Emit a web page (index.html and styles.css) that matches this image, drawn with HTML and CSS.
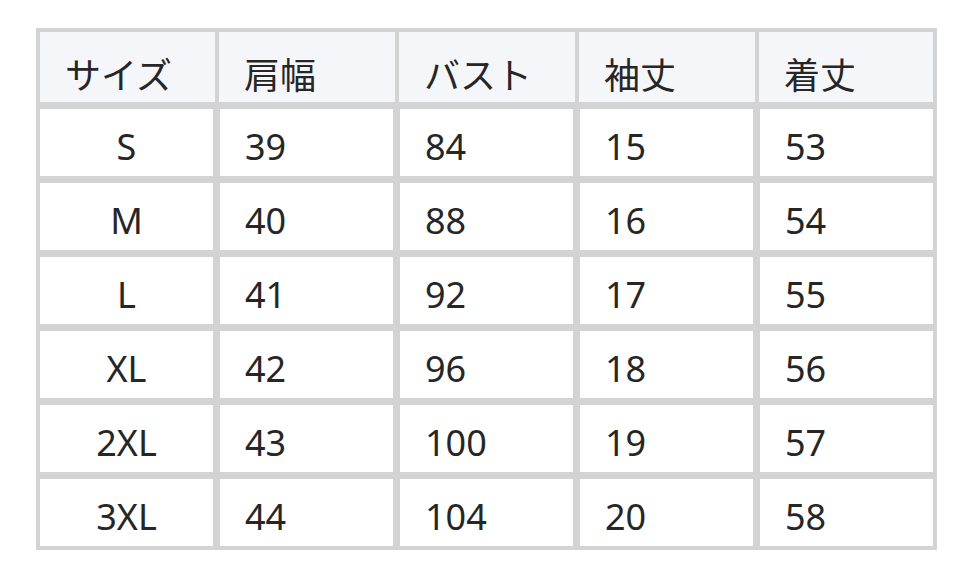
FILE: index.html
```html
<!DOCTYPE html>
<html lang="ja">
<head>
<meta charset="utf-8">
<link rel="stylesheet" href="styles.css">
</head>
<body>
<div class="table">
  <div class="head">
    <div class="th">サイズ</div>
    <div class="th">肩幅</div>
    <div class="th">バスト</div>
    <div class="th">袖丈</div>
    <div class="th">着丈</div>
  </div>
  <div class="row"><div class="td c">S</div><div class="td">39</div><div class="td">84</div><div class="td">15</div><div class="td">53</div></div>
  <div class="row"><div class="td c">M</div><div class="td">40</div><div class="td">88</div><div class="td">16</div><div class="td">54</div></div>
  <div class="row"><div class="td c">L</div><div class="td">41</div><div class="td">92</div><div class="td">17</div><div class="td">55</div></div>
  <div class="row"><div class="td c">XL</div><div class="td">42</div><div class="td">96</div><div class="td">18</div><div class="td">56</div></div>
  <div class="row"><div class="td c">2XL</div><div class="td">43</div><div class="td">100</div><div class="td">19</div><div class="td">57</div></div>
  <div class="row"><div class="td c">3XL</div><div class="td">44</div><div class="td">104</div><div class="td">20</div><div class="td">58</div></div>
</div>
</body>
</html>
```
FILE: styles.css
```css
html, body {
  margin: 0;
  padding: 0;
  background: #ffffff;
}
body {
  padding: 28px 0 0 36px;
  font-family: "Noto Sans", "Noto Sans CJK JP", sans-serif;
  color: #262626;
}
.table {
  width: 893px;
  background: #d3d3d3;
  padding: 4px;
  display: flex;
  flex-direction: column;
  gap: 7px;
}
.head {
  display: grid;
  grid-template-columns: 175px 176px 176px 176px 174px;
  column-gap: 4px;
  height: 70px;
}
.th {
  background: #f5f6fa;
  font-family: "Noto Sans CJK JP", "Noto Sans", sans-serif;
  font-size: 36px;
  display: flex;
  align-items: center;
  padding: 12px 0 0 25px;
  box-sizing: border-box;
}
.row {
  display: grid;
  grid-template-columns: repeat(5, 173px);
  column-gap: 7px;
  height: 67px;
}
.td {
  background: #ffffff;
  font-size: 36px;
  display: flex;
  align-items: center;
  padding: 7px 0 0 25px;
  box-sizing: border-box;
}
.td.c {
  justify-content: center;
  padding-left: 0;
}
```
